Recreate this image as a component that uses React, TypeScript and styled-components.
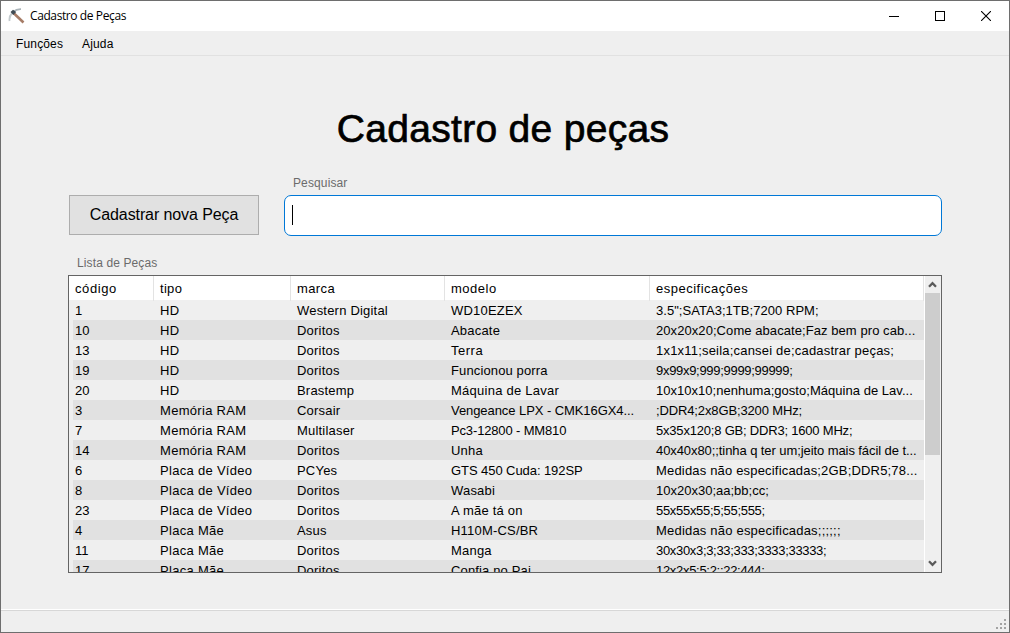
import React from "react";
import styled, { createGlobalStyle } from "styled-components";

const Global = createGlobalStyle`
  * { box-sizing: border-box; }
  body { margin: 0; overflow: hidden; font-family: "Liberation Sans", Arial, sans-serif; color: #000; }
`;

const Window = styled.div`
  width: 1010px; height: 633px; display: flex; flex-direction: column;
  background: #efefef; border: 1px solid #6e6e6e;
`;
const TitleBar = styled.header`
  height: 30px; flex: none; background: #fff; display: flex; align-items: center; padding-left: 7px;
`;
const TitleText = styled.span`
  flex: 1; margin-left: 5px; font: 12px/16px "Open Sans", "Noto Sans", sans-serif; letter-spacing: -0.4px;
`;
const CaptionButton = styled.span`
  width: 46px; height: 30px; display: flex; align-items: center; justify-content: center;
`;
const MenuBar = styled.nav`
  height: 25px; flex: none; display: flex; gap: 19px; padding: 5px 15px 0; border-bottom: 1px solid #e1e1e1;
  font-size: 12px; line-height: 16px; letter-spacing: 0.15px;
`;
const Content = styled.main`
  flex: 1; min-height: 0; padding: 48px 67px 0; display: flex; flex-direction: column;
`;
const Heading = styled.h1`
  margin: 0; padding-right: 4px; height: 50px; text-align: center; font-size: 39px; font-weight: 400;
  line-height: 50px; letter-spacing: 0.3px; -webkit-text-stroke: 0.7px #000;
`;
const FormRow = styled.div`
  margin-top: 22px; padding-left: 1px; display: flex; align-items: flex-end; gap: 25px;
`;
const RegisterButton = styled.button`
  width: 190px; height: 40px; margin: 0 0 1px 0; padding: 0; background: #e1e1e1; border: 1px solid #adadad;
  font: 16px "Liberation Sans", Arial, sans-serif; letter-spacing: -0.1px; color: #000;
`;
const Field = styled.label`
  flex: 1; display: flex; flex-direction: column;
`;
const Caption = styled.span`
  padding-left: 9px; font-size: 12px; line-height: 14px; letter-spacing: 0.12px; color: #6b6b6b;
`;
const SearchBox = styled.span`
  height: 41px; margin-top: 5px; padding-left: 7px; background: #fff; border: 1px solid #0078d7; border-radius: 7px;
  display: flex; align-items: center;
`;
const Caret = styled.span`
  width: 1px; height: 20px; margin-bottom: 2px; background: #000;
`;
const ListSection = styled.section`
  margin-top: 20px; display: flex; flex-direction: column;
`;
const ListFrame = styled.div`
  height: 298px; margin-top: 5px; display: flex; border: 1px solid #646464; overflow: hidden;
`;
const Table = styled.div`
  width: 855px; flex: none; font-size: 13px; overflow: hidden;
`;
const HeaderRow = styled.div`
  display: grid; grid-template-columns: 85px 137px 154px 205px 274px; height: 24px; background: #fff; line-height: 25px;
`;
const HeaderCell = styled.div<{ $tracking: number }>`
  padding-left: 6px; border-right: 1px solid #e3e3e3; letter-spacing: ${p => p.$tracking}px;
`;
const Row = styled.div<{ $shaded: boolean }>`
  display: grid; grid-template-columns: 81px 137px 154px 205px 274px; height: 20px; line-height: 21px;
  margin-left: 4px; background: ${p => (p.$shaded ? "#e1e1e1" : "#efefef")};
`;
const Cell = styled.div<{ $first: boolean; $tracking: number }>`
  padding-left: ${p => (p.$first ? 2 : 6)}px; white-space: pre; letter-spacing: ${p => p.$tracking}px;
`;
const ScrollBar = styled.div`
  flex: 1; display: flex; flex-direction: column; align-items: flex-start; border-left: 1px solid #fff;
`;
const ScrollButton = styled.span`
  width: 15px; height: 17px; display: flex; align-items: center; justify-content: center;
`;
const ScrollTrack = styled.div`
  flex: 1; width: 15px;
`;
const Thumb = styled.div`
  height: 162px; background: #cdcdcd;
`;
const StatusBar = styled.footer`
  height: 22px; flex: none; border-top: 1px solid #d7d7d7; box-shadow: 0 -1px 0 #fff;
  display: flex; justify-content: flex-end; align-items: flex-end; padding: 0 2px 2px 0;
`;

const headers: [string, number][] = [
  ["código", 0.6], ["tipo", 0.3], ["marca", 0.4], ["modelo", 0.5], ["especificações", 0.5],
];
// Each row ends with the letter spacing of its "modelo" and "especificações" cells.
const parts: [string, string, string, string, string, number, number][] = [
  ["1", "HD", "Western Digital", "WD10EZEX", "3.5\";SATA3;1TB;7200 RPM;", 0.2, 0.04],
  ["10", "HD", "Doritos", "Abacate", "20x20x20;Come abacate;Faz bem pro cab...", 0.2, 0.07],
  ["13", "HD", "Doritos", "Terra", "1x1x11;seila;cansei de;cadastrar peças;", 0.5, 0.2],
  ["19", "HD", "Doritos", "Funcionou porra", "9x99x9;999;9999;99999;", 0.13, -0.3],
  ["20", "HD", "Brastemp", "Máquina de Lavar", "10x10x10;nenhuma;gosto;Máquina de Lav...", 0.25, 0.03],
  ["3", "Memória RAM", "Corsair", "Vengeance LPX - CMK16GX4...", ";DDR4;2x8GB;3200 MHz;", -0.07, -0.13],
  ["7", "Memória RAM", "Multilaser", "Pc3-12800 - MM810", "5x35x120;8 GB; DDR3; 1600 MHz;", -0.15, -0.2],
  ["14", "Memória RAM", "Doritos", "Unha", "40x40x80;;tinha q ter um;jeito mais fácil de t...", 0.2, -0.08],
  ["6", "Placa de Vídeo", "PCYes", "GTS 450 Cuda: 192SP", "Medidas não especificadas;2GB;DDR5;78...", -0.07, 0.18],
  ["8", "Placa de Vídeo", "Doritos", "Wasabi", "10x20x30;aa;bb;cc;", 0.2, 0],
  ["23", "Placa de Vídeo", "Doritos", "A mãe tá on", "55x55x55;5;55;555;", 0.2, -0.3],
  ["4", "Placa Mãe", "Asus", "H110M-CS/BR", "Medidas não especificadas;;;;;;", 0.2, 0.2],
  ["11", "Placa Mãe", "Doritos", "Manga", "30x30x3;3;33;333;3333;33333;", 0.2, -0.32],
  ["17", "Placa Mãe", "Doritos", "Confia no Pai", "12x2x5;5;2;;22;444;", 0.15, -0.3],
];

const Pickaxe = () => (
  <svg width="17" height="17" viewBox="0 0 17 17" fill="none">
    <path d="M5 4.5L15.5 14.5" stroke="#a67c66" strokeWidth="2.6" />
    <path d="M1.6 13Q0.8 8.5 4.2 5" stroke="#c3cacd" strokeWidth="1.8" />
    <path d="M5 4Q8.5 1 13 1.2" stroke="#aab4b9" strokeWidth="1.8" />
    <path d="M2.5 4L5 1.8L8.2 4L5.3 7Z" fill="#3f4b53" />
  </svg>
);

const Chevron = ({ down }: { down?: boolean }) => (
  <svg width="9" height="7" viewBox="0 0 9 7" fill="none">
    <path d={down ? "M1 1.3L4.5 4.8L8 1.3" : "M1 5.7L4.5 2.2L8 5.7"} stroke="#5a5a5a" strokeWidth="2.3" />
  </svg>
);

export default function App() {
  return (
    <>
      <Global />
      <Window>
        <TitleBar>
          <Pickaxe />
          <TitleText>Cadastro de Peças</TitleText>
          <CaptionButton>
            <svg width="10" height="10" shapeRendering="crispEdges"><path d="M0 5.5H10" stroke="#000" /></svg>
          </CaptionButton>
          <CaptionButton>
            <svg width="10" height="10" shapeRendering="crispEdges"><path d="M.5 .5H9.5V9.5H.5Z" fill="none" stroke="#000" /></svg>
          </CaptionButton>
          <CaptionButton>
            <svg width="10" height="10"><path d="M0 0L10 10M10 0L0 10" stroke="#000" strokeWidth="1.1" /></svg>
          </CaptionButton>
        </TitleBar>
        <MenuBar><span>Funções</span><span>Ajuda</span></MenuBar>
        <Content>
          <Heading>Cadastro de peças</Heading>
          <FormRow>
            <RegisterButton>Cadastrar nova Peça</RegisterButton>
            <Field>
              <Caption>Pesquisar</Caption>
              <SearchBox><Caret /></SearchBox>
            </Field>
          </FormRow>
          <ListSection>
            <Caption>Lista de Peças</Caption>
            <ListFrame>
              <Table>
                <HeaderRow>
                  {headers.map(([title, tracking]) => (
                    <HeaderCell key={title} $tracking={tracking}>{title}</HeaderCell>
                  ))}
                </HeaderRow>
                {parts.map(([code, kind, brand, model, specs, modelTracking, specsTracking], i) => (
                  <Row key={code} $shaded={i % 2 === 1}>
                    <Cell $first $tracking={0}>{code}</Cell>
                    <Cell $first={false} $tracking={0.3}>{kind}</Cell>
                    <Cell $first={false} $tracking={0.2}>{brand}</Cell>
                    <Cell $first={false} $tracking={modelTracking}>{model}</Cell>
                    <Cell $first={false} $tracking={specsTracking}>{specs}</Cell>
                  </Row>
                ))}
              </Table>
              <ScrollBar>
                <ScrollButton><Chevron /></ScrollButton>
                <ScrollTrack><Thumb /></ScrollTrack>
                <ScrollButton><Chevron down /></ScrollButton>
              </ScrollBar>
            </ListFrame>
          </ListSection>
        </Content>
        <StatusBar>
          <svg width="11" height="11" fill="#a3a3a3" shapeRendering="crispEdges">
            <path d="M8 0h2v2h-2zM4 4h2v2h-2zM8 4h2v2h-2zM0 8h2v2h-2zM4 8h2v2h-2zM8 8h2v2h-2z" />
          </svg>
        </StatusBar>
      </Window>
    </>
  );
}
